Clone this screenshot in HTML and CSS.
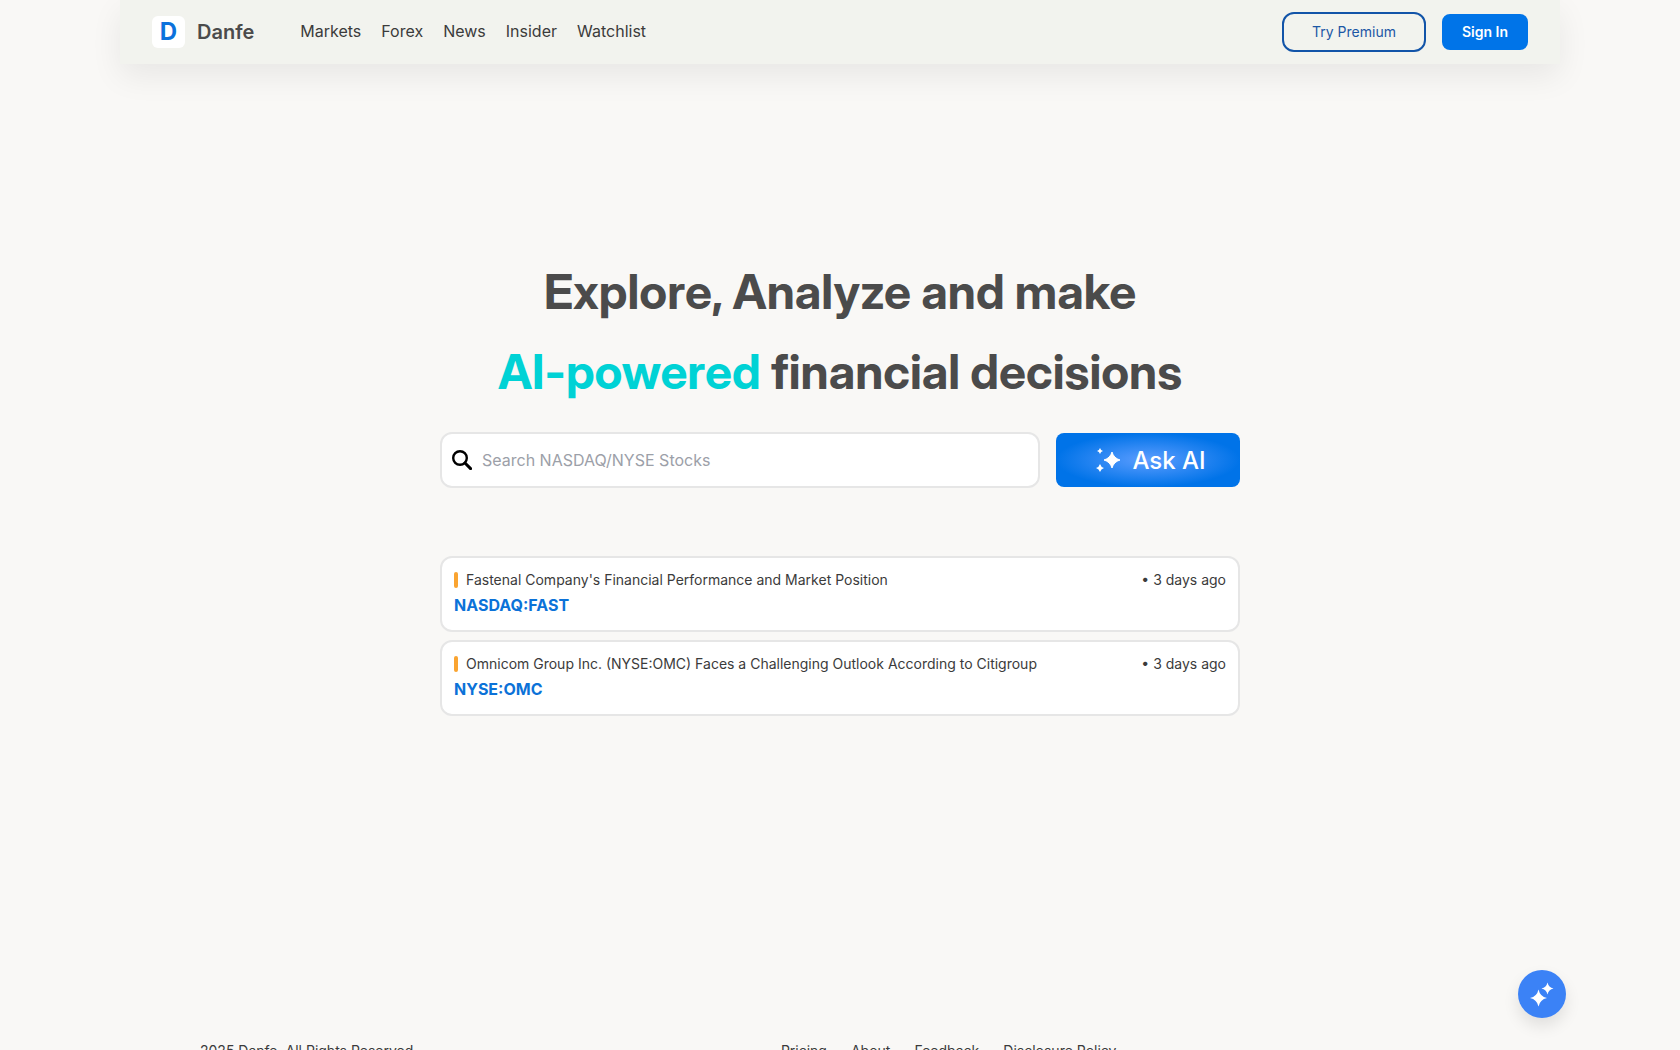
FILE: index.html
```html
<!DOCTYPE html>
<html lang="en">
<head>
<meta charset="utf-8">
<meta name="viewport" content="width=device-width, initial-scale=1">
<title>Danfe</title>
<link rel="stylesheet" href="styles.css">
</head>
<body>
<header class="header">
  <a class="brand" href="#"><span class="brand-mark">D</span><span class="brand-name">Danfe</span></a>
  <nav class="nav">
    <a href="#">Markets</a>
    <a href="#">Forex</a>
    <a href="#">News</a>
    <a href="#">Insider</a>
    <a href="#">Watchlist</a>
  </nav>
  <div class="actions">
    <button class="btn-premium" type="button">Try Premium</button>
    <button class="btn-signin" type="button">Sign In</button>
  </div>
</header>

<main class="hero">
  <h1 class="title">Explore, Analyze and make<br><span class="accent">AI-powered</span> financial decisions</h1>
  <form class="search-row">
    <label class="search">
      <svg class="search-icon" viewBox="0 0 20 20" fill="none" stroke="#000" aria-hidden="true"><circle cx="8" cy="8" r="6.8" stroke-width="2.4"/><path d="M13 13l5.6 5.6" stroke-width="3" stroke-linecap="round"/></svg>
      <input type="text" placeholder="Search NASDAQ/NYSE Stocks" aria-label="Search stocks">
    </label>
    <button class="btn-ask" type="button">
      <svg class="ask-icon" viewBox="0 0 24 24" fill="#fff" aria-hidden="true"><path d="M16 4Q17.800 10.200 24 12Q17.800 13.800 16 20Q14.200 13.800 8 12Q14.200 10.200 16 4Z" stroke="#fff" stroke-linejoin="round"/><path d="M4 0Q4.700 2.300 7 3Q4.700 3.700 4 6Q3.300 3.700 1 3Q3.300 2.300 4 0Z"/><path d="M4 16Q4.900 19.100 8 20Q4.900 20.900 4 24Q3.100 20.900 0 20Q3.100 19.100 4 16Z"/></svg>
      Ask AI
    </button>
  </form>
  <section class="news">
    <article class="card">
      <div class="card-head"><span class="marker"></span><span class="headline">Fastenal Company's Financial Performance and Market Position</span><time>• 3 days ago</time></div>
      <a class="ticker" href="#">NASDAQ:FAST</a>
    </article>
    <article class="card">
      <div class="card-head"><span class="marker"></span><span class="headline">Omnicom Group Inc. (NYSE:OMC) Faces a Challenging Outlook According to Citigroup</span><time>• 3 days ago</time></div>
      <a class="ticker" href="#">NYSE:OMC</a>
    </article>
  </section>
</main>

<footer class="footer">
  <span>2025 Danfe. All Rights Reserved.</span>
  <nav class="footer-links">
    <a href="#">Pricing</a>
    <a href="#">About</a>
    <a href="#">Feedback</a>
    <a href="#">Disclosure Policy</a>
  </nav>
</footer>

<button class="fab" type="button" aria-label="Open AI assistant">
  <svg viewBox="0 0 24 24" fill="#fff" aria-hidden="true"><path d="M8.500 7.500Q10 14.500 17 16Q10 17.500 8.500 24.500Q7 17.500 0 16Q7 14.500 8.500 7.500Z"/><path d="M17.500 .5Q18.600 5.400 23.500 6.500Q18.600 7.600 17.500 12.500Q16.400 7.600 11.500 6.500Q16.400 5.400 17.500 .5Z"/></svg>
</button>
</body>
</html>
```
FILE: styles.css
```css
* { box-sizing: border-box; }

html { scrollbar-width: none; }

body {
  margin: 0;
  min-height: 100vh;
  background: #f9f8f6;
  color: #3b3b3b;
  font: 16px/24px Inter, "Liberation Sans", sans-serif;
}

a { color: inherit; text-decoration: none; }
button { font-family: inherit; cursor: pointer; }

.header {
  display: flex;
  align-items: center;
  max-width: 1440px;
  height: 64px;
  margin: 0 auto;
  padding: 0 32px;
  background: #f2f3ee;
  box-shadow: 0 12px 32px rgba(0, 0, 0, 0.07);
}

.brand { display: flex; align-items: center; gap: 12px; }
.brand-mark {
  width: 33px;
  height: 32px;
  border-radius: 6px;
  background: #fff;
  color: #0b72dc;
  font-size: 24px;
  font-weight: 700;
  line-height: 32px;
  text-align: center;
}
.brand-name { color: #4b4b4b; font-size: 20px; font-weight: 600; }

.nav { display: flex; gap: 20px; margin-left: 46px; padding-bottom: 2px; }

.actions { display: flex; align-items: center; gap: 16px; margin-left: auto; }
.btn-premium {
  height: 40px;
  padding: 0 28px 2px;
  border: 2px solid #1254a8;
  border-radius: 12px;
  background: transparent;
  color: #1c57a5;
  font-size: 14px;
}
.btn-signin {
  height: 36px;
  padding: 0 20px 2px;
  border: 0;
  border-radius: 8px;
  background: #0074e8;
  color: #fff;
  font-size: 14px;
  font-weight: 600;
}

.hero { max-width: 800px; margin: 0 auto; padding-top: 188px; min-height: 975px; }
.title {
  margin: 0 0 20px;
  color: #4b4b4b;
  font-family: "Inter Display", Inter, "Liberation Sans", sans-serif;
  font-size: 48px;
  font-weight: 700;
  line-height: 80px;
  text-align: center;
}
.accent { color: #00d2d5; }

.search-row { display: flex; align-items: center; gap: 16px; }
.search {
  display: flex;
  flex: 1;
  align-items: center;
  gap: 10px;
  height: 56px;
  padding: 0 10px;
  border: 2px solid #e6e6e6;
  border-radius: 12px;
  background: #fff;
}
.search-icon { width: 20px; height: 20px; flex: none; }
.search input {
  flex: 1;
  min-width: 0;
  padding: 0;
  border: 0;
  outline: 0;
  background: none;
  color: inherit;
  font: inherit;
}
.search input::placeholder { color: #9ca0a8; opacity: 1; }

.btn-ask {
  display: flex;
  align-items: center;
  justify-content: center;
  gap: 12px;
  width: 184px;
  height: 54px;
  padding: 0 0 0 6px;
  border: 0;
  border-radius: 8px;
  background: radial-gradient(ellipse closest-side, #5c9dff, #0073e8);
  color: #fff;
  font-size: 24px;
  font-weight: 500;
}
.ask-icon { width: 24px; height: 24px; }

.news { display: grid; gap: 8px; margin-top: 68px; }
.card {
  display: grid;
  align-content: start;
  gap: 1px;
  height: 76px;
  padding: 10px 12px;
  border: 2px solid #e6e6e6;
  border-radius: 12px;
  background: #fff;
}
.card-head { display: flex; align-items: center; gap: 8px; font-size: 14px; }
.marker { width: 4px; height: 16px; border-radius: 2px; background: #faa431; }
.card-head time { margin-left: auto; }
.ticker { color: #0b72d8; font-weight: 700; }

.footer {
  display: flex;
  justify-content: space-between;
  max-width: 1280px;
  margin: 0 auto;
  padding-bottom: 24px;
  font-size: 14px;
}
/* Empty third column keeps the links near the centre */
.footer::after { content: ""; }
.footer-links { display: flex; gap: 24px; }

.fab {
  position: fixed;
  right: 114px;
  bottom: 32px;
  display: grid;
  place-items: center;
  width: 48px;
  height: 48px;
  padding: 0;
  border: 0;
  border-radius: 50%;
  background: #3b82f6;
  box-shadow: 0 8px 16px rgba(0, 0, 0, 0.1);
}
.fab svg { width: 24px; height: 24px; overflow: visible; }
```
